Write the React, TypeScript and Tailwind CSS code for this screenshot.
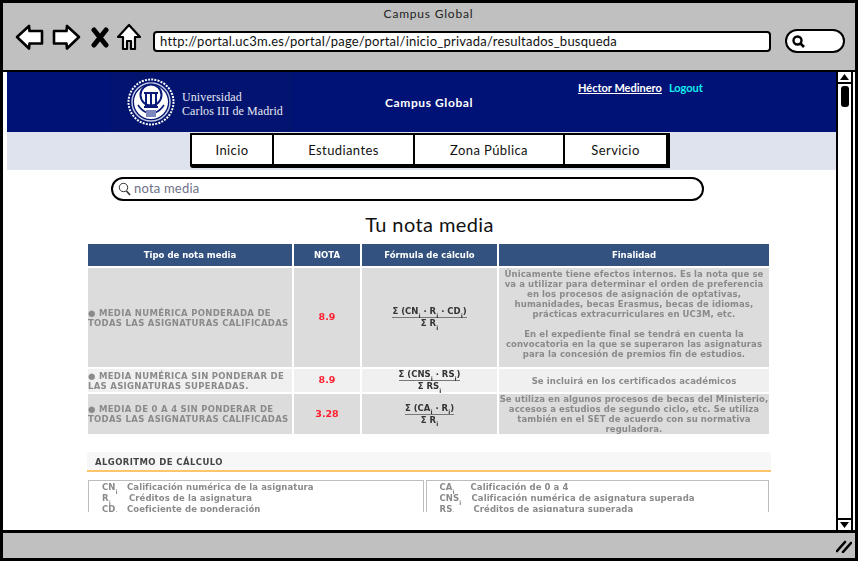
const ui = "font-['Lato','Open_Sans',sans-serif]";

function Arrow({ flip }: { flip?: boolean }) {
  return (
    <svg width="29" height="26" viewBox="0 0 29 26" className={flip ? "-scale-x-100" : ""}>
      <path d="M2 13 L14 2 L14.5 7 L27 7 L27 19.5 L14.5 19.5 L14 24.5 Z" fill="#fff" stroke="#000" strokeWidth="2.6" strokeLinejoin="round" />
    </svg>
  );
}

function Seal() {
  return (
    <svg width="48" height="48" viewBox="0 0 48 48" className="shrink-0">
      <circle cx="24" cy="24" r="22.5" fill="none" stroke="#fff" strokeWidth="2" strokeDasharray="2 1.2" />
      <circle cx="24" cy="24" r="19" fill="none" stroke="#c5c9e6" strokeWidth="1.5" />
      <circle cx="24" cy="24" r="17" fill="#fff" />
      <circle cx="24" cy="17" r="10.5" fill="none" stroke="#0a1a78" strokeWidth="2" />
      <path d="M17 14h14v2H17zM18 16h2v12h-2zM23 16h2v12h-2zM28 16h2v12h-2zM17 28h14v2H17z" fill="#0a1a78" />
      <path d="M11 27c3 5 7 7 10 8M37 27c-3 5-7 7-10 8" fill="none" stroke="#0a1a78" strokeWidth="1.6" />
      <path d="M19 32h10v7H19z" fill="#7d86bd" />
    </svg>
  );
}

function Sub() {
  return <sub className="text-[6px] leading-none align-[-2px]">i</sub>;
}

function Tab({ w, label, last }: { w: string; label: string; last?: boolean }) {
  return (
    <div className={`${w} flex items-center justify-center text-[13px] tracking-[0.4px] pt-[2px] text-[#111] ${last ? "" : "border-r-2 border-black"}`}>
      {label}
    </div>
  );
}

const cell = "bg-[#dcdcdc] flex items-center justify-center text-center";
const head = "bg-[#33527f] flex items-center justify-center text-white font-bold text-[8.5px] whitespace-nowrap";
const left = "flex items-center text-[#8a8a8a] font-bold text-[8.5px] leading-[10px] tracking-[0.3px] whitespace-nowrap";
const fin = "flex items-center justify-center text-center text-[#8a8a8a] font-bold text-[8.5px] leading-[10px] tracking-[0.1px] whitespace-nowrap";
const red = "flex items-center justify-center text-[#ff2030] font-bold text-[9.5px]";

function Formula({ top, bottom }: { top: React.ReactNode; bottom: React.ReactNode }) {
  return (
    <div className="flex flex-col items-center text-[#333] font-bold text-[8.5px] leading-[11px] whitespace-nowrap">
      <div className="border-b border-[#777]">{top}</div>
      <div>{bottom}</div>
    </div>
  );
}

function Legend({ rows, box }: { rows: [string, string, string][]; box: string }) {
  return (
    <div className={`${box} h-[32px] border border-b-0 border-[#bdbdbd] pl-[13px] pt-px text-[#8a8a8a] font-bold text-[8.5px] leading-[11px] tracking-[0.08px] whitespace-nowrap overflow-hidden`}>
      {rows.map(([a, b, w]) => (
        <div key={a} className="flex">
          <span className={w}>{a}<Sub /></span>
          <span>{b}</span>
        </div>
      ))}
    </div>
  );
}

export default function App() {
  return (
    <div className={`${ui} w-[858px] h-[561px] flex flex-col bg-white border-[3px] border-black overflow-hidden`}>
      <header className="h-[69px] shrink-0 bg-[#c0c0c0] border-b-[2px] border-black flex flex-col">
        <div className="h-[21px] flex items-center justify-center text-[12px] tracking-[0.8px] text-[#222] pr-px">Campus Global</div>
        <div className="flex items-start pl-[12px]">
          <Arrow />
          <div className="w-[8px]" />
          <Arrow flip />
          <svg width="18" height="21" viewBox="0 0 18 21" className="ml-[10px] mt-[3px]">
            <path d="M3 3 L15 18 M15 3 L3 18" stroke="#000" strokeWidth="5" strokeLinecap="round" />
          </svg>
          <svg width="26" height="28" viewBox="0 0 26 28" className="ml-[7px] -mt-px">
            <path d="M13 2 L24 14 L19 14 L19 26 L15 26 L15 18 L11 18 L11 26 L7 26 L7 14 L2 14 Z" fill="#fff" stroke="#000" strokeWidth="2.2" strokeLinejoin="round" />
          </svg>
          <div className="ml-[11px] mt-[7px] w-[618px] h-[21px] bg-white border-[2.5px] border-black rounded-[4px] flex items-center pl-[5px] text-[13px] leading-none text-[#111] tracking-[0.23px] whitespace-nowrap">
            http://portal.uc3m.es/portal/page/portal/inicio_privada/resultados_busqueda
          </div>
          <div className="ml-[14px] mt-[5px] w-[60px] h-[24px] bg-white border-[2.5px] border-black rounded-full flex items-center pl-[5px]">
            <svg width="13" height="13" viewBox="0 0 13 13">
              <circle cx="5.5" cy="5.5" r="4" fill="none" stroke="#000" strokeWidth="2.4" />
              <path d="M8.5 8.5 L12 12" stroke="#000" strokeWidth="2.6" />
            </svg>
          </div>
        </div>
      </header>

      <div className="h-[458px] shrink-0 flex">
        <main className="flex-1 min-w-0 pl-[4px] flex flex-col overflow-hidden">
          <div className="h-[60px] shrink-0 bg-[#001276] flex text-white">
            <div className="ml-[104px] w-[181px] bg-[#02146f] flex items-center pl-[16px] gap-[7px]">
              <Seal />
              <div className="font-['Liberation_Serif',serif] text-[12px] leading-[14px] pt-[3px] text-[#e8e8f4] tracking-[0.1px] whitespace-nowrap">
                Universidad<br />Carlos III de Madrid
              </div>
            </div>
            <div className="ml-[93px] w-[100px] self-center text-[12px] font-bold tracking-[0.6px] pt-[2px] whitespace-nowrap">Campus Global</div>
            <div className="ml-[93px] pt-[9px] flex gap-[7px] text-[11px] font-bold leading-[14px] whitespace-nowrap">
              <span className="underline">Héctor Medinero</span>
              <span className="text-[#14f0ee]">Logout</span>
            </div>
          </div>
          <div className="h-[38px] shrink-0 bg-[#dfe3ee] pl-[183px] pt-px">
            <nav className="w-[480px] h-[35px] bg-white border-2 border-black border-r-[4px] border-b-[4px] rounded-bl-[3px] flex">
              <Tab w="w-[82px]" label="Inicio" />
              <Tab w="w-[141px]" label="Estudiantes" />
              <Tab w="w-[150px]" label="Zona Pública" />
              <Tab w="flex-1" label="Servicio" last />
            </nav>
          </div>
          <div className="pl-[104px] pt-[7px] shrink-0">
            <div className="w-[593px] h-[24px] border-[2.5px] border-black rounded-full flex items-center pl-[5px] gap-[3px] text-[#6f7187] text-[13px] tracking-[0.2px]">
              <svg width="13" height="14" viewBox="0 0 13 14">
                <circle cx="5.5" cy="5.5" r="4.2" fill="none" stroke="#333" strokeWidth="1" />
                <path d="M8.5 9 L12 13" stroke="#333" strokeWidth="1.6" />
              </svg>
              nota media
            </div>
          </div>
          <h1 className="shrink-0 text-center text-[20px] leading-[26px] pt-[10px] h-[43px] text-[#111] pl-[16px] tracking-[0.4px]">Tu nota media</h1>

          <div className="ml-[81px] w-[681px] shrink-0 font-['DejaVu_Sans',sans-serif] blur-[0.35px]">
            <div className="grid grid-cols-[204px_66px_135px_270px] gap-x-[2px] gap-y-[2px] grid-rows-[22px_99px_23px_40px] bg-white">
              <div className={head}>Tipo de nota media</div>
              <div className={head}>NOTA</div>
              <div className={head}>Fórmula de cálculo</div>
              <div className={head}>Finalidad</div>

              <div className={`${left} bg-[#dcdcdc]`}><div>● MEDIA NUMÉRICA PONDERADA DE<br />TODAS LAS ASIGNATURAS CALIFICADAS</div></div>
              <div className={`${red} bg-[#dcdcdc]`}>8.9</div>
              <div className={cell}><Formula top={<>Σ (CN<Sub /> · R<Sub /> · CD<Sub />)</>} bottom={<>Σ R<Sub /></>} /></div>
              <div className={`${fin} bg-[#dcdcdc] pb-[7px]`}>
                <div>Únicamente tiene efectos internos. Es la nota que se<br />va a utilizar para determinar el orden de preferencia<br />en los procesos de asignación de optativas,<br />humanidades, becas Erasmus, becas de idiomas,<br />prácticas extracurriculares en UC3M, etc.<br /><br />En el expediente final se tendrá en cuenta la<br />convocatoria en la que se superaron las asignaturas<br />para la concesión de premios fin de estudios.</div>
              </div>

              <div className={`${left} bg-[#f0f0f0]`}><div>● MEDIA NUMÉRICA SIN PONDERAR DE<br />LAS ASIGNATURAS SUPERADAS.</div></div>
              <div className={`${red} bg-[#f0f0f0]`}>8.9</div>
              <div className="bg-[#f0f0f0] flex items-center justify-center"><Formula top={<>Σ (CNS<Sub /> · RS<Sub />)</>} bottom={<>Σ RS<Sub /></>} /></div>
              <div className={`${fin} bg-[#f0f0f0]`}>Se incluirá en los certificados académicos</div>

              <div className={`${left} bg-[#dcdcdc]`}><div>● MEDIA DE 0 A 4 SIN PONDERAR DE<br />TODAS LAS ASIGNATURAS CALIFICADAS</div></div>
              <div className={`${red} bg-[#dcdcdc]`}>3.28</div>
              <div className={cell}><Formula top={<>Σ (CA<Sub /> · R<Sub />)</>} bottom={<>Σ R<Sub /></>} /></div>
              <div className={`${fin} bg-[#dcdcdc]`}>
                <div>Se utiliza en algunos procesos de becas del Ministerio,<br />accesos a estudios de segundo ciclo, etc. Se utiliza<br />también en el SET de acuerdo con su normativa<br />reguladora.</div>
              </div>
            </div>

            <div className="mt-[18px] -ml-px w-[684px] h-[20px] bg-[#f7f7f7] border-b-2 border-[#fbc66a] rounded-t-[3px] flex items-center pl-[8px] pt-[2px] text-[#444] font-bold text-[8.5px] tracking-[0.4px]">ALGORITMO DE CÁLCULO</div>
            <div className="mt-[8px] flex gap-[2px]">
              <Legend box="w-[336px]" rows={[
                ["CN", "Calificación numérica de la asignatura", "w-[25px]"],
                ["R", "Créditos de la asignatura", "w-[27px]"],
                ["CD", "Coeficiente de ponderación", "w-[25px]"],
              ]} />
              <Legend box="w-[344px]" rows={[
                ["CA", "Calificación de 0 a 4", "w-[31px]"],
                ["CNS", "Calificación numérica de asignatura superada", "w-[32px]"],
                ["RS", "Créditos de asignatura superada", "w-[34px]"],
              ]} />
            </div>
          </div>
        </main>

        <aside className="w-[17px] shrink-0 mr-[2px] border-x-2 border-black flex flex-col justify-between bg-white">
          <div>
            <div className="h-[12px] border-b-2 border-black flex items-center justify-center">
              <svg width="9" height="6" viewBox="0 0 9 6"><path d="M4.5 0 L9 6 L0 6 Z" fill="#000" /></svg>
            </div>
            <div className="mt-[2px] mx-auto w-[8px] h-[21px] rounded-[3px] bg-black" />
          </div>
          <div className="h-[12px] border-t-2 border-black flex items-center justify-center">
            <svg width="9" height="6" viewBox="0 0 9 6"><path d="M4.5 6 L9 0 L0 0 Z" fill="#000" /></svg>
          </div>
        </aside>
      </div>

      <footer className="flex-1 bg-[#c0c0c0] border-t-[3px] border-black flex items-center justify-end pr-[3px]">
        <svg width="16" height="14" viewBox="0 0 16 14">
          <path d="M1 12 L9 3 M7 13 L15 4" stroke="#000" strokeWidth="2.6" strokeLinecap="round" />
        </svg>
      </footer>
    </div>
  );
}
